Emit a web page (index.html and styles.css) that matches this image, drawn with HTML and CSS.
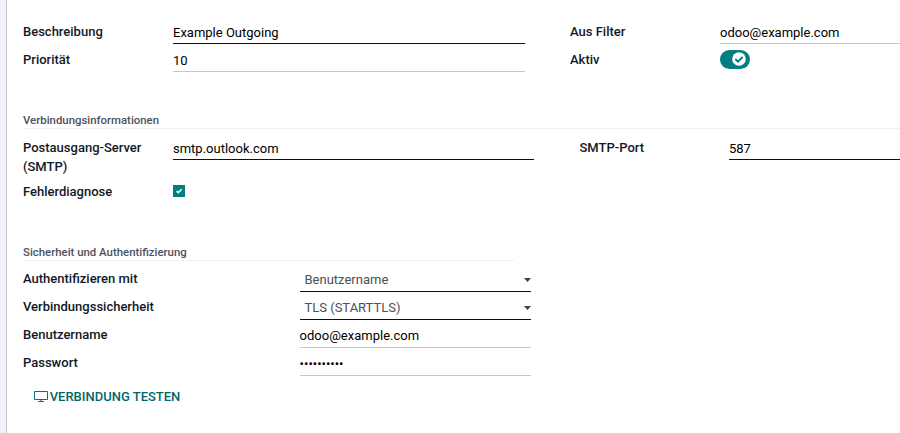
FILE: index.html
```html
<!DOCTYPE html>
<html lang="de">
<head>
<meta charset="utf-8">
<title>Postausgangsserver</title>
<link rel="stylesheet" href="styles.css">
</head>
<body>
<main class="sheet">
  <section class="group group-main">
    <div class="column">
      <div class="row"><label class="label">Beschreibung</label><div class="field required">Example Outgoing</div></div>
      <div class="row"><label class="label">Priorität</label><div class="field">10</div></div>
    </div>
    <div class="column">
      <div class="row"><label class="label">Aus Filter</label><div class="field">odoo@example.com</div></div>
      <div class="row"><label class="label">Aktiv</label>
        <span class="switch"><svg class="knob" viewBox="0 0 14 14"><circle cx="7" cy="7" r="6.8" fill="#fff"/><path d="M3.3 7 6 9.6 10.7 4.9" fill="none" stroke="#017e84" stroke-width="2"/></svg></span>
      </div>
    </div>
  </section>
  <section class="connection">
    <h2 class="title">Verbindungsinformationen</h2>
    <div class="group group-connection">
      <div class="column">
        <div class="row row-tall"><label class="label">Postausgang-Server (SMTP)</label><div class="field required">smtp.outlook.com</div></div>
        <div class="row"><label class="label">Fehlerdiagnose</label>
          <svg class="checkbox" viewBox="0 0 12 12"><path fill="#017e84" d="M0 0h12v12H0z"/><path d="m3.6 6.1 1.7 1.6 3.3-3.4" fill="none" stroke="#fff" stroke-width="1.6"/></svg>
        </div>
      </div>
      <div class="column">
        <div class="row"><label class="label label-port">SMTP-Port</label><div class="field required">587</div></div>
      </div>
    </div>
  </section>
  <section class="security">
    <h2 class="title">Sicherheit und Authentifizierung</h2>
    <div class="column">
      <div class="row"><label class="label">Authentifizieren mit</label><div class="field required select">Benutzername<i class="caret"></i></div></div>
      <div class="row"><label class="label">Verbindungssicherheit</label><div class="field required select">TLS (STARTTLS)<i class="caret"></i></div></div>
      <div class="row"><label class="label">Benutzername</label><div class="field">odoo@example.com</div></div>
      <div class="row"><label class="label">Passwort</label><div class="field">••••••••••</div></div>
    </div>
    <button class="test" type="button"><svg class="screen" viewBox="0 0 14 11"><path d="M.5.5h13v8H.5zM7 9v1.500M4 10.500h6" fill="none" stroke="#017478" stroke-linejoin="round"/></svg>VERBINDUNG TESTEN</button>
  </section>
</main>
</body>
</html>
```
FILE: styles.css
```css
* { box-sizing: border-box; }

body {
  margin: 0;
  height: 433px;
  padding-left: 6px;
  overflow: hidden;
  background: #f0f2f7;
  color: #000;
  font: 13px/19px Roboto, sans-serif;
}

.sheet {
  height: 433px;
  padding: 20px 0 0 16px;
  border-left: 1px solid #c0c5cc;
  background: #fff;
}

.group { display: grid; }
.group-main { grid-template-columns: 502px 330px; column-gap: 45px; }
.group-connection { grid-template-columns: 511px 330px; column-gap: 45px; }

.column {
  display: flex;
  flex-direction: column;
  gap: 4px;
}

.row {
  display: grid;
  grid-template-columns: 150px 1fr;
  height: 24px;
}

.row-tall { height: 40px; }

.label {
  padding: 2px 20px 0 0;
  color: #111827;
  font-weight: 500;
}

.label-port { padding-left: 0.5px; }

.field {
  height: 24px;
  padding-top: 3px;
  border-bottom: 1px solid #c6c6c6;
}

.field.required { border-color: #0b0f1f; }

.switch {
  width: 30px;
  height: 19px;
  margin-top: 2px;
  padding: 2px 0 0 12px;
  border-radius: 10px;
  background: #017e84;
}

.knob {
  display: block;
  width: 14px;
  height: 14px;
}

.title {
  height: 17px;
  margin: 0 0 7px;
  border-bottom: 1px solid #f1f2f4;
  color: #4b5261;
  font-size: 11.4px;
  line-height: 16px;
  font-weight: 500;
}

.connection { margin-top: 40px; }

.checkbox {
  width: 12px;
  height: 12px;
  margin-top: 5px;
}

.security {
  width: 508px;
  margin-top: 40px;
}

.security .title { width: 492px; }
.security .row { grid-template-columns: 277px 231px; }
.security .label { padding-top: 1px; }

.security .field {
  padding-top: 2px;
  text-indent: -0.4px;
}

.security .select {
  display: flex;
  align-items: flex-start;
  justify-content: space-between;
  padding-left: 4.5px;
  color: #495057;
  text-indent: 0;
}

.caret {
  width: 7px;
  height: 4px;
  margin-top: 8px;
  background: #374151;
  clip-path: polygon(0 0, 100% 0, 50% 100%);
}

.test {
  display: flex;
  align-items: center;
  margin: 11px 0 0 11px;
  padding: 0;
  border: 0;
  background: none;
  color: #01666b;
  font: 500 13px/19px Roboto, sans-serif;
}

.screen {
  width: 14px;
  height: 11px;
  margin-right: 1.7px;
}
```
